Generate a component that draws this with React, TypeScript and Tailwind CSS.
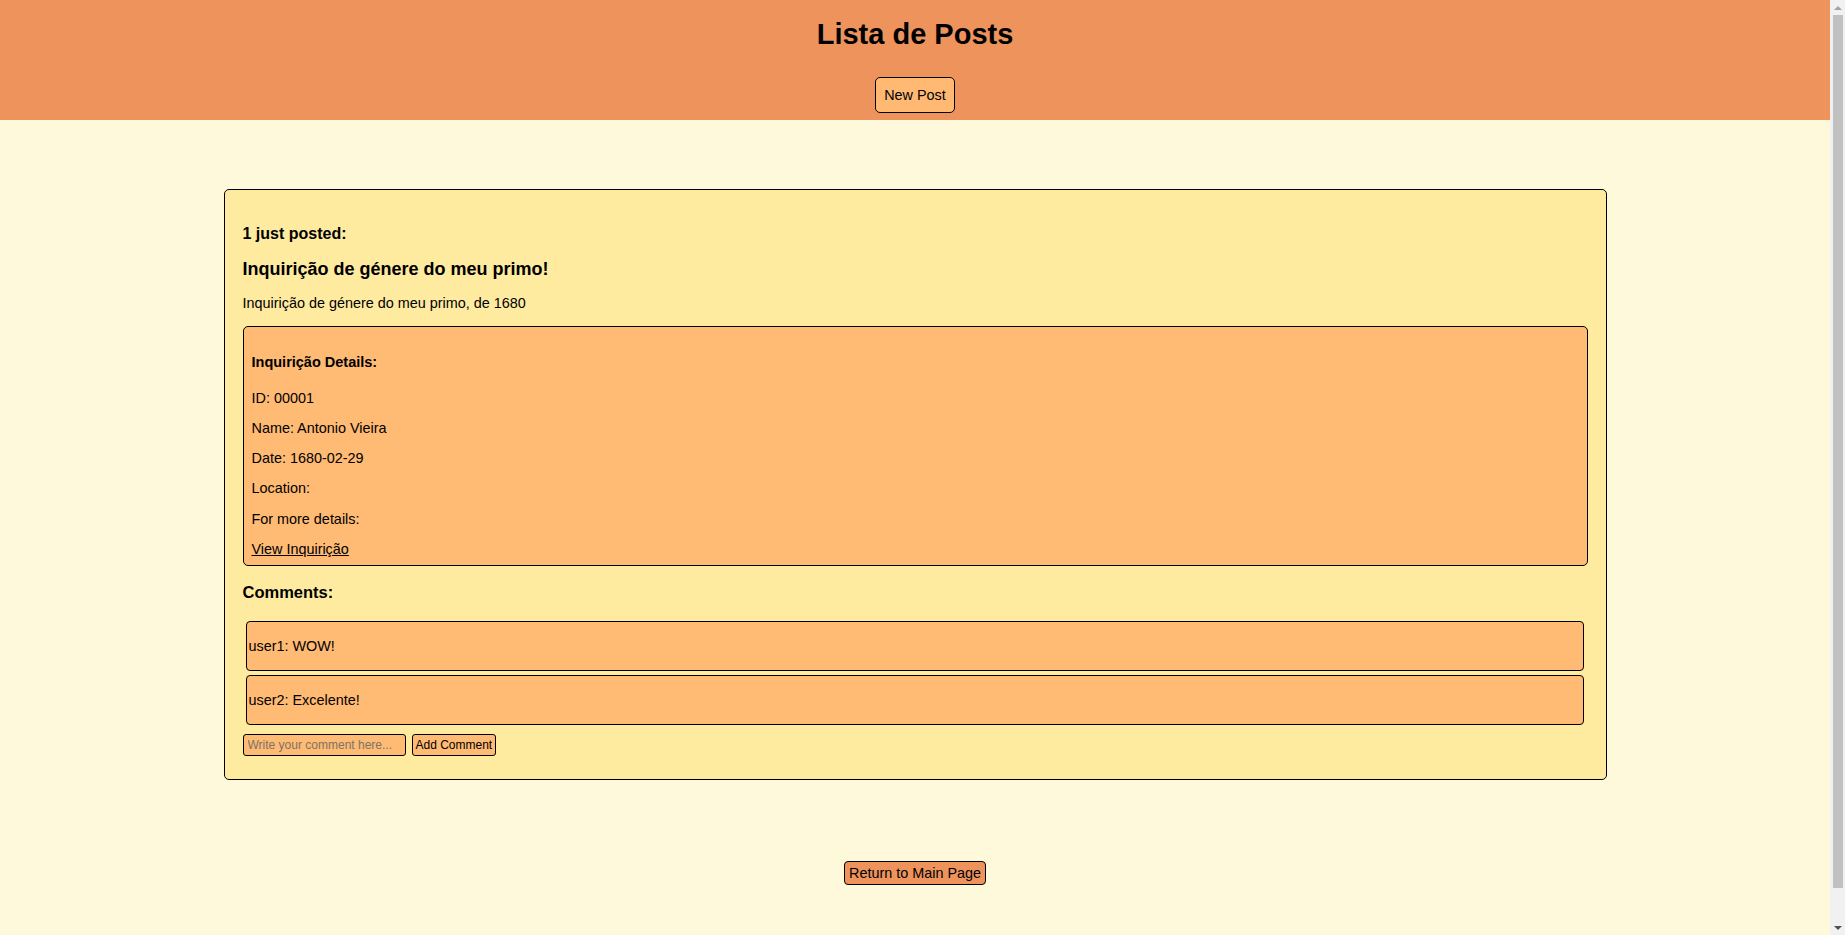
import React from 'react'

const comments = [
  { user: 'user1', text: 'WOW!' },
  { user: 'user2', text: 'Excelente!' },
]

function Scrollbar() {
  return (
    <div className="w-[15px] shrink-0 h-full bg-[#f1f1f1] flex flex-col">
      <div className="h-[15px] flex items-center justify-center">
        <div className="w-0 h-0 border-l-[4px] border-r-[4px] border-b-[4px] border-l-transparent border-r-transparent border-b-[#a3a3a3]" />
      </div>
      <div className="ml-[3px] w-[10px] h-[873px] bg-[#c1c1c1]" />
      <div className="flex-1" />
      <div className="h-[15px] flex items-center justify-center">
        <div className="w-0 h-0 border-l-[4px] border-r-[4px] border-t-[4px] border-l-transparent border-r-transparent border-t-[#505050]" />
      </div>
    </div>
  )
}

export default function App() {
  return (
    <div className="h-screen flex overflow-hidden font-['Liberation_Sans',Arial,sans-serif] text-black">
      <div className="flex-1 min-w-0 bg-[#fff9db] pb-[84px]">
        {/* Header */}
        <header className="bg-[#ee935c] flex flex-col items-center pt-[18px] pb-[7px]">
          <h1 className="text-[29px] font-bold leading-[33px]">Lista de Posts</h1>
          <button className="mt-[26px] bg-[#ffb973] border border-black rounded-[5px] px-[8.5px] py-[9px] text-[14.4px] leading-[16px]">
            New Post
          </button>
        </header>

        {/* Post */}
        <main className="mt-[69px]">
          <div className="w-[1383px] mx-auto border border-black rounded-[5px] bg-[#ffeba0] px-[18px] pt-[34.5px] pb-[23px]">
            <h4 className="text-[16px] font-bold leading-[18px]">1 just posted:</h4>
            <h3 className="mt-[16px] text-[18px] font-bold leading-[21px]">Inquirição de génere do meu primo!</h3>
            <p className="mt-[15.5px] text-[14.4px] leading-[16px]">Inquirição de génere do meu primo, de 1680</p>

            <div className="mt-[14.5px] border border-black rounded-[5px] bg-[#ffba73] p-[8px] text-[14.4px] leading-[16px]">
              <h4 className="mt-[19px] text-[14.5px] font-bold leading-[17px]">Inquirição Details:</h4>
              <p className="mt-[19px]">ID: 00001</p>
              <p className="mt-[14.25px]">Name: Antonio Vieira</p>
              <p className="mt-[14.25px]">Date: 1680-02-29</p>
              <p className="mt-[14.25px]">Location:</p>
              <p className="mt-[14.25px]">For more details:</p>
              <p className="mt-[14.25px]">
                <a href="#" className="underline">View Inquirição</a>
              </p>
            </div>

            <h4 className="mt-[17.5px] text-[16.5px] font-bold leading-[19px]">Comments:</h4>
            <div className="mt-[18.5px] ml-[3px] mr-[4px] flex flex-col gap-[4px]">
              {comments.map((c) => (
                <div key={c.user} className="border border-black rounded-[4px] bg-[#ffba73] px-[2px] py-[16px] text-[14.4px] leading-[16px]">
                  {c.user}: {c.text}
                </div>
              ))}
            </div>

            <div className="mt-[9px] flex items-center gap-[6px]">
              <input
                type="text"
                placeholder="Write your comment here..."
                className="w-[163px] bg-[#ffba73] border border-black rounded-[3px] px-[4px] py-[3px] text-[12px] leading-[14px] placeholder:text-[#7b7468] outline-none"
              />
              <button className="bg-[#ffba73] border border-black rounded-[3px] px-[3px] py-[3px] text-[12px] leading-[14px]">
                Add Comment
              </button>
            </div>
          </div>
        </main>

        <div className="mt-[81px] flex justify-center">
          <button className="bg-[#ee935c] border border-black rounded-[4px] px-[4px] py-[3px] text-[14.4px] leading-[16px]">
            Return to Main Page
          </button>
        </div>
      </div>
      <Scrollbar />
    </div>
  )
}
